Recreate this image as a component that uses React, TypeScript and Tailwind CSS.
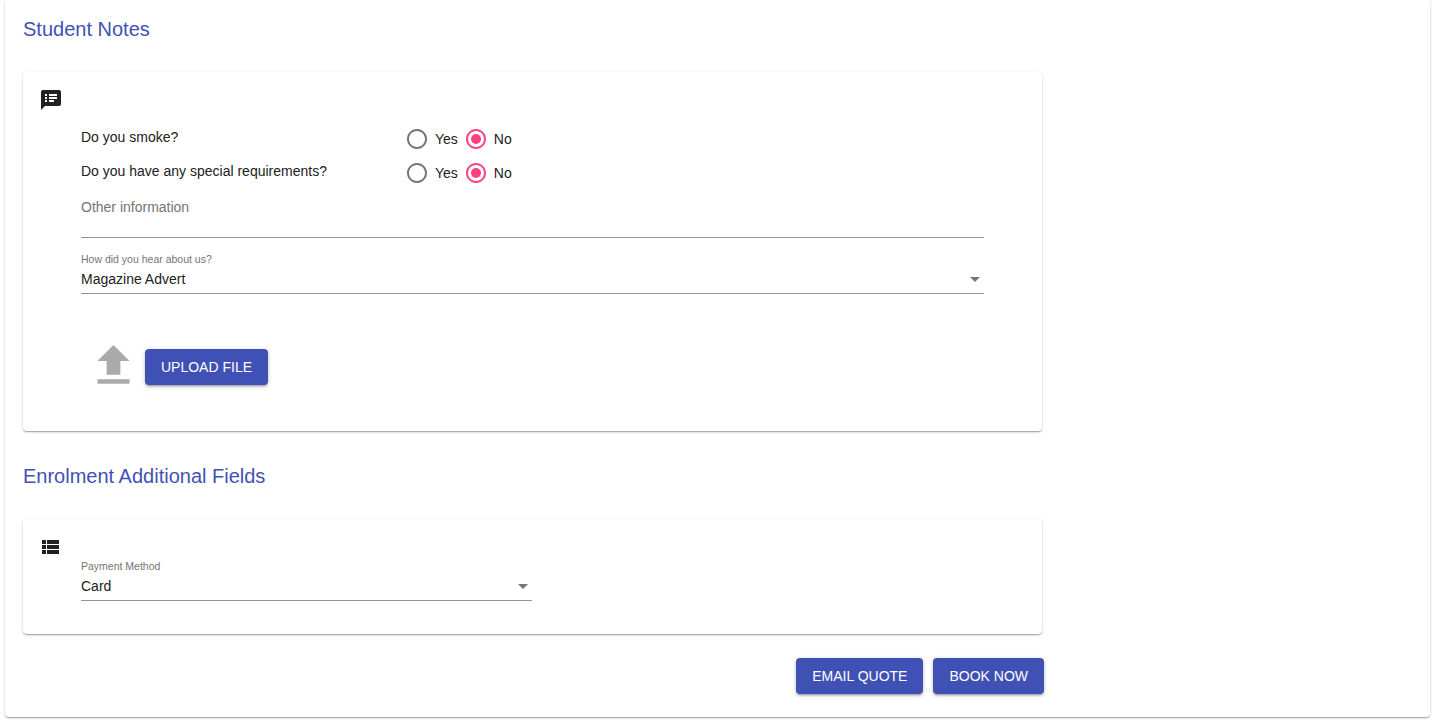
const ICON_NOTES =
  "M20 2H4c-1.1 0-1.99.9-1.99 2L2 22l4-4h14c1.1 0 2-.9 2-2V4c0-1.1-.9-2-2-2zM8 14H6v-2h2v2zm0-3H6V9h2v2zm0-3H6V6h2v2zm7 6h-5v-2h5v2zm3-3h-8V9h8v2zm0-3h-8V6h8v2z";
const ICON_LIST =
  "M4 14h4v-4H4v4zm0 5h4v-4H4v4zM4 9h4V5H4v4zm5 5h12v-4H9v4zm0 5h12v-4H9v4zM9 5v4h12V5H9z";

function Radio({ label, checked }: { label: string; checked?: boolean }) {
  return (
    <label className="flex items-center gap-[6px]">
      <svg viewBox="0 0 24 24" className={`w-6 h-6 ${checked ? "fill-[#ff4081]" : "fill-[#757575]"}`}>
        <path d="M12 2C6.48 2 2 6.48 2 12s4.48 10 10 10 10-4.48 10-10S17.52 2 12 2zm0 18c-4.42 0-8-3.58-8-8s3.58-8 8-8 8 3.58 8 8-3.58 8-8 8z" />
        {checked && <circle cx="12" cy="12" r="5" />}
      </svg>
      <span className="text-sm leading-6 text-[#212121]">{label}</span>
    </label>
  );
}

function Question({ text }: { text: string }) {
  return (
    <div className="flex h-[34px] items-center">
      <div className="w-[324px] text-sm text-[#212121] leading-5 -mt-1">{text}</div>
      <div className="flex gap-[6px]">
        <Radio label="Yes" />
        <Radio label="No" checked />
      </div>
    </div>
  );
}

function Select({ label, value, className }: { label: string; value: string; className: string }) {
  return (
    <div className={`border-b border-[#949494] pb-px ${className}`}>
      <div className="text-[10.5px] leading-3 text-[#757575]">{label}</div>
      <div className="flex items-center justify-between h-[27px]">
        <span className="text-sm text-[#212121]">{value}</span>
        <svg viewBox="0 0 24 24" className="w-6 h-6 fill-[#757575] -mr-[3px]">
          <path d="M7 10l5 5 5-5z" />
        </svg>
      </div>
    </div>
  );
}

function Button({ children }: { children: string }) {
  return (
    <button
      type="button"
      className="h-9 px-4 rounded bg-[#3f51b5] text-white text-sm shadow-[0_1px_5px_rgba(0,0,0,0.2),0_2px_2px_rgba(0,0,0,0.14),0_3px_1px_-2px_rgba(0,0,0,0.12)]"
    >
      {children}
    </button>
  );
}

function Card({ icon, iconClass, className, children }: { icon: string; iconClass: string; className: string; children: React.ReactNode }) {
  return (
    <div className={`w-[1019px] rounded bg-white pt-4 shadow-[0_1px_3px_rgba(0,0,0,0.2),0_1px_1px_rgba(0,0,0,0.14),0_2px_1px_-1px_rgba(0,0,0,0.12)] ${className}`}>
      <svg viewBox="0 0 24 24" className={`w-6 h-6 fill-[#212121] ${iconClass}`}>
        <path d={icon} />
      </svg>
      <div className="pl-[58px]">{children}</div>
    </div>
  );
}

export default function App() {
  return (
    <div className="bg-white h-[723px] overflow-hidden font-['Liberation_Sans',Arial,sans-serif]">
      <div className="ml-[5px] w-[1425px] h-[717px] rounded-b px-[18px] pt-[17px] shadow-[0_1px_3px_rgba(0,0,0,0.2),0_1px_1px_rgba(0,0,0,0.14),0_2px_1px_-1px_rgba(0,0,0,0.12)]">
        <h2 className="text-xl leading-6 text-[#3f51b5]">Student Notes</h2>

        <Card icon={ICON_NOTES} iconClass="ml-4" className="mt-[31px] h-[359px]">
          <div className="pt-[10px]">
            <Question text="Do you smoke?" />
            <Question text="Do you have any special requirements?" />
          </div>
          <div className="w-[903px] h-[48px] border-b border-[#949494] pt-[7px] text-sm leading-5 text-[#757575]">
            Other information
          </div>
          <Select label="How did you hear about us?" value="Magazine Advert" className="w-[903px] mt-[15px]" />
          <div className="flex items-center mt-[47px] ml-[5px]">
            <svg viewBox="0 0 24 24" className="w-[55px] h-[55px] fill-[#aaaaaa] shrink-0 -mt-[3px]">
              <path d="M9 16h6v-6h4l-7-7-7 7h4zm-4 2h14v2H5z" />
            </svg>
            <div className="ml-1">
              <Button>UPLOAD FILE</Button>
            </div>
          </div>
        </Card>

        <h2 className="mt-[33px] text-xl leading-6 text-[#3f51b5]">Enrolment Additional Fields</h2>

        <Card icon={ICON_LIST} iconClass="ml-[15px]" className="mt-[31px] h-[115px]">
          <Select label="Payment Method" value="Card" className="w-[451px] mt-px" />
        </Card>

        <div className="flex justify-end gap-[10px] w-[1021px] mt-[24px]">
          <Button>EMAIL QUOTE</Button>
          <Button>BOOK NOW</Button>
        </div>
      </div>
    </div>
  );
}
